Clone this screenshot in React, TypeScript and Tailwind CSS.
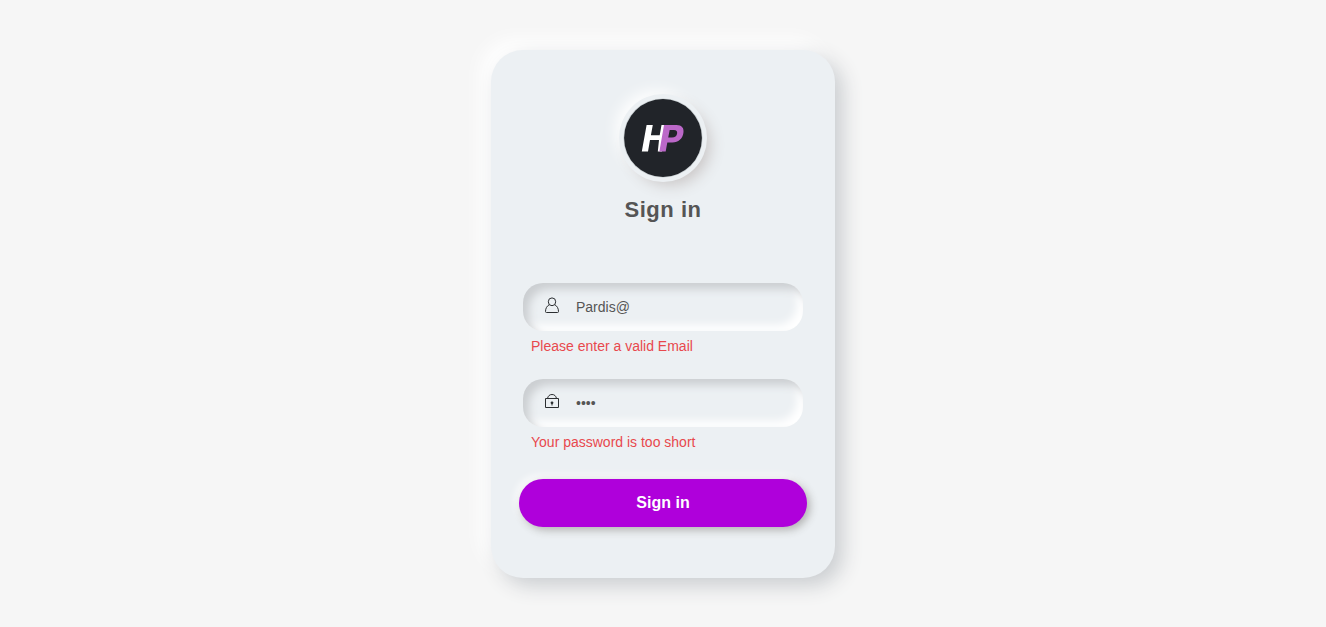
import { useState } from "react";
import type { InputHTMLAttributes, ReactNode } from "react";

function Logo() {
  return (
    <svg
      viewBox="0 0 80 80"
      role="img"
      aria-label="HP"
      className="size-20 rounded-full bg-[#ecf0f3] shadow-[0_0_0_4px_#ecf0f3,7px_7px_15px_#c9c5c5,-7px_-7px_15px_#ffffff]"
    >
      <circle cx="40" cy="40" r="39.800" fill="#cfd5d8" />
      <circle cx="40" cy="40" r="38.900" fill="#212429" />
      <path
        fill="#ffffff"
        d="M23.600 27h6.200l-1.900 10.300h8.800L38.500 27h3.900L39 53.600h-4.200L36 42h-9l-2 11.600h-6.200z"
      />
      <path
        fill="#bb68c8"
        fillRule="evenodd"
        d="M41 27h12.500c5.300 0 7.800 3 6.900 8.100-.9 5.800-4.900 9.300-11 9.300h-5.100l-1.600 9.200h-6.300zM46.700 31.900l-1.500 7.700h3.800c3 0 4.700-1.400 5.100-4 .4-2.500-.6-3.700-3.200-3.700z"
      />
    </svg>
  );
}

function UserIcon() {
  return (
    <svg viewBox="0 0 16 16" fill="none" stroke="#2b2e31" className="size-4 shrink-0" aria-hidden="true">
      <ellipse cx="8" cy="4.800" rx="3.700" ry="3.900" />
      <path d="M5.300 7.700C3 8.900 1.500 11.300 1.500 14.500c0 .7.300 1 1 1h11c.7 0 1-.3 1-1 0-3.200-1.500-5.600-3.800-6.800" />
    </svg>
  );
}

function LockIcon() {
  return (
    <svg viewBox="0 0 16 16" fill="none" stroke="#2b2e31" className="size-4 shrink-0" aria-hidden="true">
      <path d="M1.500 5.500h13v9h-13z" />
      <path d="M3.500 5.500C4 3 5.500 1.500 8 1.500s4 1.500 4.500 4" />
      <circle cx="8" cy="9.800" r="1.400" fill="#2b2e31" stroke="none" />
      <path d="M8 10v2.500" />
    </svg>
  );
}

type FieldProps = InputHTMLAttributes<HTMLInputElement> & {
  id: string;
  label: string;
  icon: ReactNode;
  error: string;
};

function Field({ id, label, icon, error, ...input }: FieldProps) {
  return (
    <div className="flex h-24 flex-col">
      <div className="flex h-12 items-center gap-4 rounded-[20px] px-5 pb-1 shadow-[inset_6px_6px_8px_#cbced1,inset_-6px_-6px_8px_#ffffff]">
        <label htmlFor={id} aria-label={label} className="pl-px">
          {icon}
        </label>
        <input
          id={id}
          aria-invalid={error !== ""}
          aria-describedby={`${id}-error`}
          className="mt-1 w-full min-w-0 bg-transparent text-sm text-[#555555] outline-none"
          {...input}
        />
      </div>
      <p id={`${id}-error`} className="px-2 pt-1 text-sm/[22px] text-[#e8484d]">
        {error}
      </p>
    </div>
  );
}

export default function App() {
  const [email, setEmail] = useState("Pardis@");
  const [password, setPassword] = useState("pass");

  return (
    <main className="flex min-h-screen items-center justify-center bg-[#f6f6f6] p-4 font-['Liberation_Sans',Arial,sans-serif]">
      <form
        noValidate
        onSubmit={(event) => event.preventDefault()}
        className="mt-px flex w-full max-w-[344px] flex-col rounded-[32px] bg-[#ecf0f3] px-7 pt-12 pb-[51px] shadow-[8px_8px_20px_#cbced1,-10px_-10px_20px_#ffffff]"
      >
        <div className="flex flex-col items-center gap-4">
          <Logo />
          <h1 className="text-[22px]/8 font-bold tracking-wide text-[#555555]">Sign in</h1>
        </div>
        <div className="mt-[57px] px-1">
          <Field
            id="email"
            label="Email"
            type="text"
            autoComplete="email"
            icon={<UserIcon />}
            value={email}
            onChange={(event) => setEmail(event.target.value)}
            error={/^\S+@\S+\.\S+$/.test(email) ? "" : "Please enter a valid Email"}
          />
          <Field
            id="password"
            label="Password"
            type="password"
            autoComplete="current-password"
            icon={<LockIcon />}
            value={password}
            onChange={(event) => setPassword(event.target.value)}
            error={password.length >= 8 ? "" : "Your password is too short"}
          />
        </div>
        <button
          type="submit"
          className="mt-1 h-12 cursor-pointer rounded-full bg-[#af00db] text-base font-bold text-white shadow-[3px_3px_8px_#b1b1b1,-3px_-3px_8px_#ffffff]"
        >
          Sign in
        </button>
      </form>
    </main>
  );
}
